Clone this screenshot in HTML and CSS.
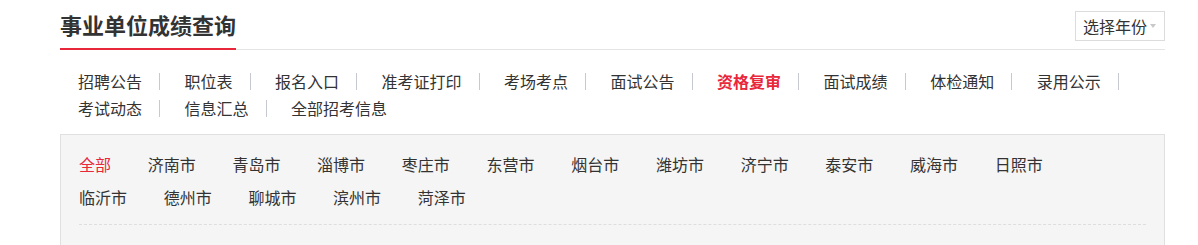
FILE: index.html
```html
<!DOCTYPE html>
<html lang="zh-CN">
<head>
<meta charset="utf-8">
<title>事业单位成绩查询</title>
<link rel="stylesheet" href="styles.css">
</head>
<body>
<div class="wrap">
  <div class="head">
    <h2 class="title">事业单位成绩查询</h2>
    <div class="select">选择年份<span class="caret"></span></div>
  </div>
  <ul class="nav">
    <li><a href="#">招聘公告</a><span class="sep"></span></li>
    <li><a href="#">职位表</a><span class="sep"></span></li>
    <li><a href="#">报名入口</a><span class="sep"></span></li>
    <li><a href="#">准考证打印</a><span class="sep"></span></li>
    <li><a href="#">考场考点</a><span class="sep"></span></li>
    <li><a href="#">面试公告</a><span class="sep"></span></li>
    <li><a href="#" class="active">资格复审</a><span class="sep"></span></li>
    <li><a href="#">面试成绩</a><span class="sep"></span></li>
    <li><a href="#">体检通知</a><span class="sep"></span></li>
    <li><a href="#">录用公示</a><span class="sep"></span></li>
    <li><a href="#">考试动态</a><span class="sep"></span></li>
    <li><a href="#">信息汇总</a><span class="sep"></span></li>
    <li><a href="#">全部招考信息</a></li>
  </ul>
  <div class="box">
    <div class="cities">
      <ul class="city-list">
        <li><a href="#" class="on">全部</a></li>
        <li><a href="#">济南市</a></li>
        <li><a href="#">青岛市</a></li>
        <li><a href="#">淄博市</a></li>
        <li><a href="#">枣庄市</a></li>
        <li><a href="#">东营市</a></li>
        <li><a href="#">烟台市</a></li>
        <li><a href="#">潍坊市</a></li>
        <li><a href="#">济宁市</a></li>
        <li><a href="#">泰安市</a></li>
        <li><a href="#">威海市</a></li>
        <li><a href="#">日照市</a></li>
        <li><a href="#">临沂市</a></li>
        <li><a href="#">德州市</a></li>
        <li><a href="#">聊城市</a></li>
        <li><a href="#">滨州市</a></li>
        <li><a href="#">菏泽市</a></li>
      </ul>
    </div>
  </div>
</div>
</body>
</html>
```
FILE: styles.css
```css
* { box-sizing: border-box; }
html, body { margin: 0; padding: 0; background: #fff; }
body {
  font-family: "Noto Sans CJK SC", "Noto Sans", sans-serif;
  color: #333;
}
a { color: #333; text-decoration: none; }
ul { list-style: none; margin: 0; padding: 0; }

.wrap { margin-left: 60px; width: 1105px; }

.head {
  display: flex;
  justify-content: space-between;
  align-items: flex-start;
  border-bottom: 1px solid #e4e4e4;
  height: 50px;
}
.title {
  margin: 0 0 -1px 0;
  font-size: 22px;
  font-weight: bold;
  line-height: 48px;
  height: 50px;
  color: #333;
  border-bottom: 2px solid #e8273a;
}
.select {
  margin-top: 11px;
  height: 30px;
  width: 90px;
  border: 1px solid #dcdcdc;
  font-size: 16px;
  line-height: 28px;
  padding-left: 7px;
  color: #333;
  display: flex;
  align-items: center;
}
.caret {
  margin-left: 3px;
  width: 0;
  height: 0;
  border-left: 3px solid transparent;
  border-right: 3px solid transparent;
  border-top: 4px solid #c8c8c8;
}

.nav {
  display: flex;
  flex-wrap: wrap;
  padding: 18px 0 0 18px;
  margin-bottom: 12px;
}
.nav li {
  display: flex;
  align-items: center;
  font-size: 16px;
  line-height: 27px;
}
.nav .active { color: #e8273a; font-weight: bold; }
.sep {
  display: inline-block;
  width: 1px;
  height: 17px;
  background: #c6c9d0;
  margin: 0 24.5px 0 17px;
}

.box {
  background: #f5f5f5;
  border: 1px solid #e0e0e0;
  padding: 13px 18px 40px 18px;
}
.cities {
  border-bottom: 1px dashed #dedede;
  padding-bottom: 10px;
}
.city-list {
  display: flex;
  flex-wrap: wrap;
  column-gap: 36.7px;
  max-width: 1000px;
}
.city-list li { font-size: 16px; line-height: 33px; }
.city-list .on { color: #e8273a; }
```
